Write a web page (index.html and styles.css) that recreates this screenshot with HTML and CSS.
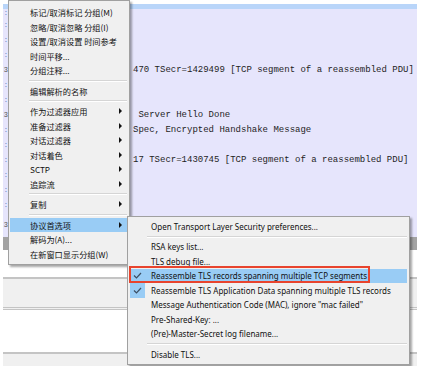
FILE: index.html
```html
<!DOCTYPE html>
<html lang="zh">
<head>
<meta charset="UTF-8">
<title>协议首选项</title>
<link rel="stylesheet" href="styles.css">
</head>
<body>
<div class="screen">
  <!-- Packet list -->
  <div class="packet-list">
    <div class="row row-sel"></div>
    <div class="row row-top"><span class="tail">:</span><span class="info"></span></div>
    <div class="row"><span class="tail">:</span><span class="info"></span></div>
    <div class="row"><span class="tail">:</span><span class="info"></span></div>
    <div class="row"><span class="tail">:</span><span class="info"></span></div>
    <div class="row"><span class="tail dark">3</span><span class="info">470 TSecr=1429499 [TCP segment of a reassembled PDU]</span></div>
    <div class="row"><span class="tail">:</span><span class="info"></span></div>
    <div class="row"><span class="tail">:</span><span class="info"></span></div>
    <div class="row"><span class="tail dark">3</span><span class="info">&nbsp;Server Hello Done</span></div>
    <div class="row"><span class="tail">:</span><span class="info">Spec, Encrypted Handshake Message</span></div>
    <div class="row"><span class="tail">:</span><span class="info"></span></div>
    <div class="row"><span class="tail">:</span><span class="info">17 TSecr=1430745 [TCP segment of a reassembled PDU]</span></div>
    <div class="row"><span class="tail">:</span><span class="info"></span></div>
    <div class="row"><span class="tail">:</span><span class="info"></span></div>
    <div class="row"><span class="tail">:</span><span class="info"></span></div>
    <div class="row row-end"><span class="tail dark">3</span><span class="info"></span></div>
    <div class="row row-grey"></div>
    <div class="row row-white"></div>
    <div class="row row-white"></div>
  </div>

  <!-- Detail / bytes panes -->
  <div class="pane pane-grey"></div>
  <div class="pane pane-white"></div>
  <div class="pane pane-bottom"></div>

  <!-- Context menu -->
  <div class="ctx-menu">
    <div class="item">标记/取消标记 分组(M)</div>
    <div class="item">忽略/取消忽略 分组(I)</div>
    <div class="item">设置/取消设置 时间参考</div>
    <div class="item">时间平移...</div>
    <div class="item">分组注释...</div>
    <div class="sep"></div>
    <div class="item">编辑解析的名称</div>
    <div class="sep"></div>
    <div class="item">作为过滤器应用<i class="arrow"></i></div>
    <div class="item">准备过滤器<i class="arrow"></i></div>
    <div class="item">对话过滤器<i class="arrow"></i></div>
    <div class="item">对话着色<i class="arrow"></i></div>
    <div class="item">SCTP<i class="arrow"></i></div>
    <div class="item">追踪流<i class="arrow"></i></div>
    <div class="sep"></div>
    <div class="item">复制<i class="arrow"></i></div>
    <div class="sep"></div>
    <div class="item active">协议首选项<i class="arrow"></i></div>
    <div class="item">解码为(A)...</div>
    <div class="item">在新窗口显示分组(W)</div>
  </div>

  <!-- Protocol preferences submenu -->
  <div class="sub-menu">
    <div class="sub-item"><span class="chk"></span>Open Transport Layer Security preferences...</div>
    <div class="sep"></div>
    <div class="sub-item"><span class="chk"></span>RSA keys list...</div>
    <div class="sub-item"><span class="chk"></span>TLS debug file...</div>
    <div class="sub-item active"><span class="chk"><svg width="9" height="7" viewBox="0 0 9 7"><polyline points="1,3.5 3.5,6 8,1" fill="none" stroke="#3c4e63" stroke-width="1.2"/></svg></span>Reassemble TLS records spanning multiple TCP segments</div>
    <div class="sub-item"><span class="chk on"><svg width="9" height="7" viewBox="0 0 9 7"><polyline points="1,3.5 3.5,6 8,1" fill="none" stroke="#3c4e63" stroke-width="1.2"/></svg></span>Reassemble TLS Application Data spanning multiple TLS records</div>
    <div class="sub-item"><span class="chk"></span>Message Authentication Code (MAC), ignore "mac failed"</div>
    <div class="sub-item"><span class="chk"></span>Pre-Shared-Key: ...</div>
    <div class="sub-item"><span class="chk"></span>(Pre)-Master-Secret log filename...</div>
    <div class="sep"></div>
    <div class="sub-item"><span class="chk"></span>Disable TLS...</div>
  </div>

  <!-- Annotation -->
  <div class="mark"></div>
</div>
</body>
</html>
```

FILE: styles.css
```css
:root {
  --tcp:#e6e5fc;
  --menu:#f0f0f0;
  --hl:#99ccf5;
  --line:#d5d5d5;
}

html, body {margin:0; padding:0; background:#fff;}

.screen {
  position:relative;
  width:423px; height:366px;
  overflow:hidden;
  padding-top:4px;
  box-sizing:border-box;
}

/* Packet list */
.packet-list {margin-left:3px; width:414px;}
.row {
  display:flex; align-items:center;
  height:15px;
  background:var(--tcp);
  font-family:'Liberation Mono', monospace;
  font-size:9px;
  color:#1e1e1e;
  white-space:nowrap;
}
.row-sel {height:5px; background:#b9d5f9;}
.row-top {height:8.5px;}
.row-end {height:24.5px;}
.row-grey {height:13px; background:#a3a3a3;}
.row-white {height:13.5px; background:#fff;}
.tail {width:5px; overflow:hidden; color:#5b7fc4; font-size:7px; text-align:right;}
.tail.dark {color:#555;}
.info {margin-left:125px;}

/* Lower panes */
.pane {margin-left:3px; width:414px;}
.pane-grey {height:28px; border-top:2px solid #c4c4c4; border-bottom:3px double #c4c4c4; background:#f0f0f0;}
.pane-white {height:42px; background:#fff; border-bottom:2px solid #c4c4c4;}
.pane-bottom {height:20px; background:#f0f0f0;}

/* Context menu */
.ctx-menu {
  position:absolute; left:8px; top:0;
  width:122px;
  padding:4px 0 3px;
  box-sizing:border-box;
  background:var(--menu);
  border:1px solid #a0a0a0;
  box-shadow:2px 2px 2px rgba(0,0,0,0.35);
  font-family:'Noto Sans CJK SC', sans-serif;
  font-size:8.2px;
  color:#111;
}
.item {
  display:flex; justify-content:space-between; align-items:center;
  height:14.5px;
  margin:0 1px;
  padding:0 6px 0 20px;
}
.item.active {background:var(--hl);}
.arrow {width:0; height:0; border-left:3px solid #111; border-top:3px solid transparent; border-bottom:3px solid transparent;}
.sep {height:6px; display:flex; align-items:center; margin-left:20px; margin-right:2px;}
.sep::before {content:""; flex:1; height:1px; background:var(--line); border-bottom:1px solid #fff;}

/* Submenu */
.sub-menu {
  position:absolute; left:127px; top:216px;
  width:283px;
  padding:2px 0;
  box-sizing:border-box;
  background:var(--menu);
  border:1px solid #a0a0a0;
  box-shadow:2px 2px 2px rgba(0,0,0,0.35);
  font-family:'Noto Sans', 'Noto Sans CJK SC', sans-serif;
  font-size:8px;
  color:#111;
}
.sub-item {display:flex; align-items:center; height:14.5px; margin:0 2px; white-space:nowrap;}
.sub-item.active {background:var(--hl);}
.chk {width:15px; height:14.5px; display:flex; align-items:center; justify-content:center; margin-right:6px;}
.chk.on {background:var(--hl);}
.sub-menu .sep {margin-left:19px;}

/* Red annotation box */
.mark {
  position:absolute; left:129px; top:266px;
  width:241px; height:17px;
  box-sizing:border-box;
  border:2px solid #e8442e;
}
```
